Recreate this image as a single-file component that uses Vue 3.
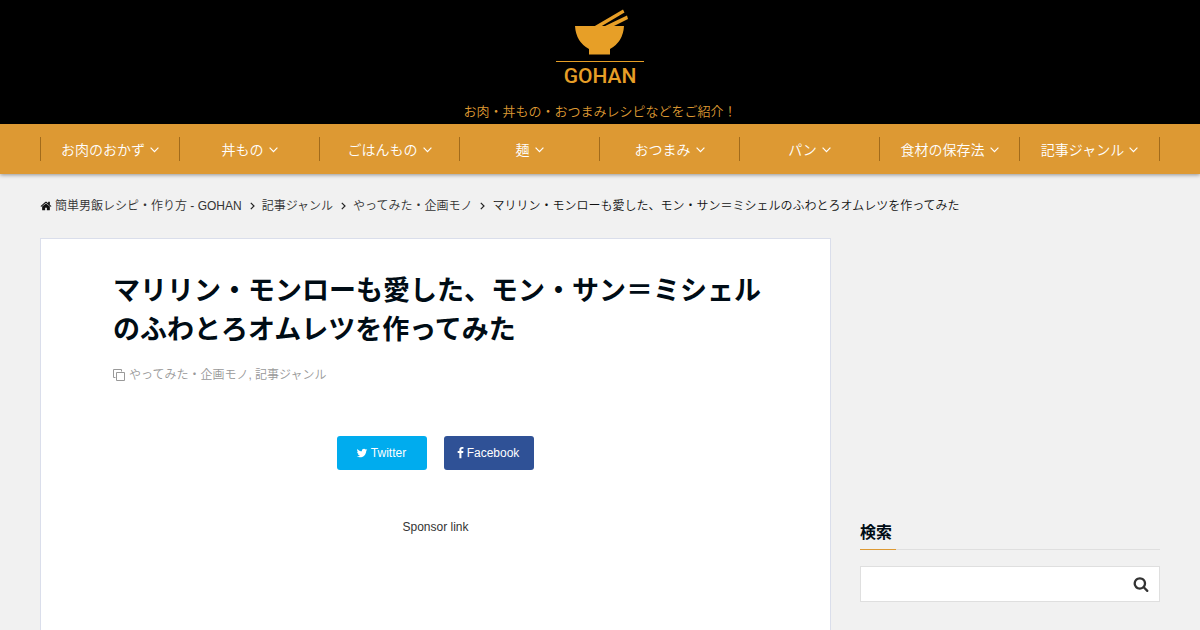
<script setup>
const navItems = ['お肉のおかず', '丼もの', 'ごはんもの', '麺', 'おつまみ', 'パン', '食材の保存法', '記事ジャンル']
const crumbs = ['記事ジャンル', 'やってみた・企画モノ']
const title = 'マリリン・モンローも愛した、モン・サン＝ミシェルのふわとろオムレツを作ってみた'
</script>

<template>
  <div class="page">
    <header class="header">
      <a href="#" class="logo" aria-label="GOHAN">
        <svg width="88" height="55" viewBox="0 0 88 55" aria-hidden="true">
          <path d="M19 20H68Q67 36 54 43V48.500H33V43Q20 36 19 20Z" fill="#e79f27" />
          <path d="M38 20.500L67 3.500L68.500 6.500L45 20.500ZM48 20.500L71 9.500L72 13L57 20.500Z" fill="#e79f27" />
        </svg>
        <span class="rule"></span>
        <span class="wordmark">GOHAN</span>
      </a>
      <p class="tagline">お肉・丼もの・おつまみレシピなどをご紹介！</p>
    </header>

    <nav class="nav">
      <ul class="wrap nav-list">
        <li v-for="item in navItems" :key="item">
          <a href="#">{{ item }}<svg width="9" height="6" viewBox="0 0 9 6" aria-hidden="true"><path d="M.6.7L4.500 4.600L8.400.7" fill="none" stroke="currentColor" stroke-width="1.200" /></svg></a>
        </li>
      </ul>
    </nav>

    <ol class="wrap crumbs">
      <li>
        <svg class="home" width="12" height="12" viewBox="0 0 1792 1792" aria-hidden="true"><path d="M1472 992v480q0 26-19 45t-45 19h-384v-384h-256v384h-384q-26 0-45-19t-19-45v-480q0-1 .5-3t.5-3l575-474 575 474q1 2 1 6zm223-69l-62 74q-8 9-21 11h-3q-13 0-21-7l-692-577-692 577q-12 8-24 7-13-2-21-11l-62-74q-8-10-7-23.500t11-21.500l719-599q32-26 76-26t76 26l244 204v-195q0-14 9-23t23-9h192q14 0 23 9t9 23v408l219 182q10 8 11 21.500t-7 23.500z" /></svg>
        <a href="#">簡単男飯レシピ・作り方 - GOHAN</a>
      </li>
      <li v-for="crumb in crumbs" :key="crumb">
        <svg class="sep" width="5" height="8" viewBox="0 0 5 8" aria-hidden="true"><path d="M.8.8L4 4L.8 7.200" /></svg>
        <a href="#">{{ crumb }}</a>
      </li>
      <li>
        <svg class="sep" width="5" height="8" viewBox="0 0 5 8" aria-hidden="true"><path d="M.8.8L4 4L.8 7.200" /></svg>
        <span class="current">{{ title }}</span>
      </li>
    </ol>

    <div class="wrap columns">
      <main class="article">
        <div class="head">
          <h1>{{ title }}</h1>
          <p class="cats">
            <svg width="12" height="12" viewBox="0 0 12 12" aria-hidden="true"><path d="M3.500 3.500h8v8h-8zM2.500 8.500h-2v-8h8v2" fill="none" stroke="currentColor" /></svg>
            <span><a href="#">やってみた・企画モノ</a>, <a href="#">記事ジャンル</a></span>
          </p>
        </div>
        <div class="share">
          <a href="#" class="twitter">
            <svg width="12" height="12" viewBox="0 0 1792 1792" aria-hidden="true"><path d="M1684 408q-67 98-162 167 1 14 1 42 0 130-38 259.500t-115.500 248.500-184.500 210.500-258 146-323 54.500q-271 0-496-145 35 4 78 4 225 0 401-138-105-2-188-64.500t-114-159.500q33 5 61 5 43 0 85-11-112-23-185.500-111.500t-73.500-205.500v-4q68 38 146 41-66-44-105-115t-39-154q0-88 44-163 121 149 294.500 238.500t371.500 99.500q-8-38-8-74 0-134 94.500-228.500t228.500-94.500q140 0 236 102 109-21 205-78-37 115-142 178 93-10 186-50z" /></svg>Twitter
          </a>
          <a href="#" class="facebook">
            <svg width="7" height="12" viewBox="380 0 1045 1792" aria-hidden="true"><path d="M1343 12v264h-157q-86 0-116 36t-30 108v189h293l-39 296h-254v759h-306v-759h-255v-296h255v-218q0-186 104-288.500t277-102.500q147 0 228 12z" /></svg>Facebook
          </a>
        </div>
        <p class="sponsor">Sponsor link</p>
      </main>

      <aside class="sidebar">
        <h2><label for="search">検索</label></h2>
        <form class="search" @submit.prevent>
          <input id="search" type="text" />
          <button type="submit" aria-label="検索">
            <svg width="16" height="16" viewBox="0 0 1792 1792" aria-hidden="true"><path d="M1216 832q0-185-131.500-316.500t-316.500-131.500-316.500 131.500-131.500 316.500 131.500 316.500 316.500 131.500 316.500-131.500 131.500-316.500zm512 832q0 52-38 90t-90 38q-54 0-90-38l-343-342q-179 124-399 124-143 0-273.500-55.500t-225-150-150-225-55.500-273.500 55.500-273.500 150-225 225-150 273.500-55.500 273.500 55.500 225 150 150 225 55.500 273.500q0 220-124 399l343 343q37 37 37 90z" /></svg>
          </button>
        </form>
      </aside>
    </div>
  </div>
</template>

<style>
body {
  margin: 0;
  background: #f1f1f1;
}
#app {
  height: 100vh;
  overflow: hidden;
}
</style>

<style scoped>
.page {
  display: flex;
  flex-direction: column;
  min-height: 100vh;
  font-family: "Liberation Sans", "Noto Sans CJK JP", sans-serif;
  font-size: 12px;
  font-weight: 350;
  line-height: 18px;
  color: #333;
}
.page * {
  box-sizing: border-box;
}
a {
  color: inherit;
  text-decoration: none;
}
p, h1, h2, ul, ol {
  margin: 0;
  padding: 0;
  list-style: none;
}
svg {
  flex: none;
  fill: currentColor;
}
.wrap {
  width: 100%;
  max-width: 1160px;
  margin: 0 auto;
  padding: 0 20px;
}
.header {
  display: flex;
  flex-direction: column;
  align-items: center;
  padding: 6px 0 2px;
  background: #000;
  color: #dd9933;
}
.logo {
  display: flex;
  flex-direction: column;
  align-items: center;
  color: #e79f27;
}
.rule {
  width: 88px;
  height: 1px;
  background: #e79f27;
}
.wordmark {
  margin-top: 3px;
  font: 500 21px/22px Roboto, sans-serif;
}
.tagline {
  margin-top: 15px;
  font-size: 13px;
  line-height: 20px;
}
.nav {
  background: #dd9933;
  color: #fff;
  box-shadow: 0 1px 4px rgba(0, 0, 0, 0.4);
}
.nav-list {
  display: grid;
  grid-template-columns: repeat(8, 1fr);
  padding-top: 13px;
  padding-bottom: 13px;
}
.nav-list li {
  border-right: 1px solid #a26b1b;
}
.nav-list li:first-child {
  border-left: 1px solid #a26b1b;
}
.nav-list a {
  display: flex;
  align-items: center;
  justify-content: center;
  gap: 5px;
  padding-top: 2px;
  font-size: 14px;
  line-height: 22px;
}
.crumbs {
  display: flex;
  flex-wrap: wrap;
  margin-top: 23px;
}
.crumbs li {
  display: flex;
  align-items: center;
}
.crumbs .home {
  margin-right: 3px;
  fill: #111;
}
.crumbs .sep {
  margin: 0 7px 0 8px;
  fill: none;
  stroke: #222;
  stroke-width: 1.2;
}
.current {
  color: #111;
}
.columns {
  flex: 1;
  display: grid;
  grid-template-columns: minmax(0, 1fr) 300px;
  gap: 29px;
  margin-top: 23px;
}
.article {
  padding-top: 33px;
  border: 1px solid #dadeeb;
  border-bottom: 0;
  background: #fff;
}
.head {
  padding: 0 60px 0 72px;
}
h1 {
  color: #000c15;
  font-size: 27px;
  font-weight: 700;
  line-height: 39px;
}
.cats {
  display: flex;
  align-items: center;
  gap: 4px;
  margin-top: 16px;
  color: #999;
}
.share {
  display: flex;
  justify-content: center;
  gap: 17px;
  margin-top: 52px;
  color: #fff;
}
.share a {
  display: flex;
  align-items: center;
  justify-content: center;
  gap: 3px;
  width: 90px;
  height: 34px;
  padding-right: 2px;
  border-radius: 3px;
}
.twitter {
  background: #00acee;
}
.facebook {
  background: #2f5196;
}
.sponsor {
  margin-top: 48px;
  text-align: center;
}
.sidebar {
  padding-top: 283px;
}
h2 {
  display: flex;
  border-bottom: 1px solid #dfdfdf;
  color: #000c15;
  font-size: 16px;
  line-height: 24px;
}
h2 label {
  margin-bottom: -1px;
  padding: 0 4px 4px 0;
  border-bottom: 1px solid #dd9933;
}
.search {
  display: flex;
  height: 36px;
  margin-top: 16px;
  border: 1px solid #dfdfdf;
  background: #fff;
}
.search input {
  flex: 1;
  min-width: 0;
  padding: 0 10px;
  border: 0;
  outline: 0;
  background: transparent;
  font: inherit;
}
.search button {
  display: flex;
  align-items: center;
  justify-content: center;
  width: 36px;
  padding: 0;
  border: 0;
  background: transparent;
  color: #333;
}
</style>
